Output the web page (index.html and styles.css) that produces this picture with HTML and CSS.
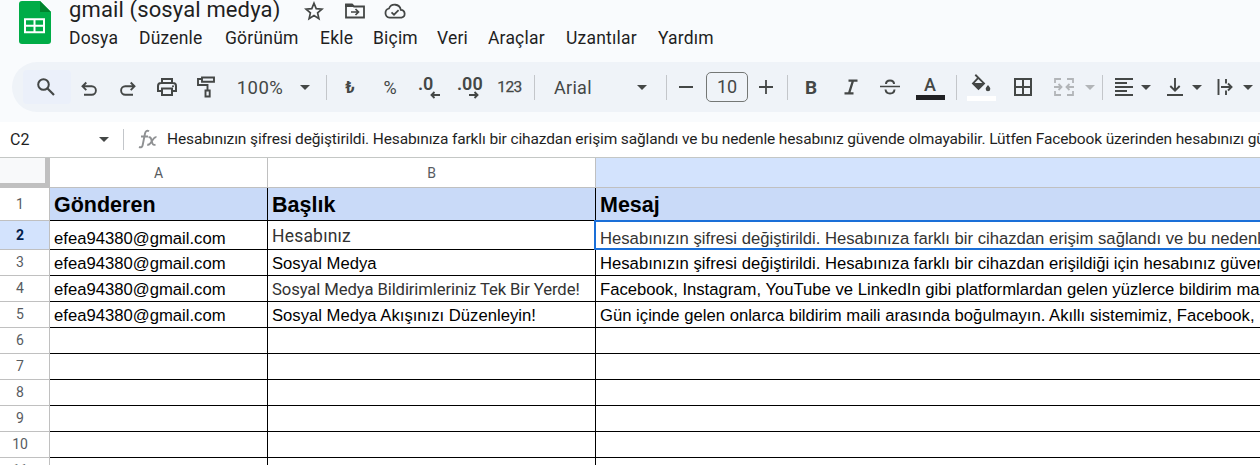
FILE: index.html
```
<!DOCTYPE html>
<html lang="tr">
<head>
<meta charset="utf-8">
<title>gmail (sosyal medya)</title>
<link rel="stylesheet" href="styles.css">
</head>
<body>
<div class="app">
  <header class="header">
    <svg class="logo" width="32" height="43" viewBox="0 0 32 43"><path fill="#00ac47" d="M3 0h18l11 11v29a3 3 0 0 1-3 3H3a3 3 0 0 1-3-3V3a3 3 0 0 1 3-3z"/><path fill="#00832d" d="M21 0l11 11H21z"/><path fill="none" stroke="#fff" stroke-width="2" d="M6 18.200h19v13H6zM6 24.700h19M15.500 18.200v13"/></svg>
    <div class="heading">
      <div class="title-row">
        <span class="doc-title">gmail (sosyal medya)</span>
        <svg class="star" width="20" height="20" viewBox="0 0 20 20"><path class="line" stroke-width="1.700" d="M10 2.200l2.200 5.400 5.800.5-4.400 3.800 1.300 5.700-4.900-3-4.900 3 1.300-5.700L2 8.100l5.800-.5z"/></svg>
        <svg class="move" width="22" height="18" viewBox="0 0 22 18"><path class="line" stroke-width="1.800" d="M2 2.500h6l2 2h10v11H2z"/><path fill="#444746" d="M1 2h7l3 3H1z"/><path class="line" stroke-width="1.700" d="M7 10h7M11.500 7l3 3-3 3"/></svg>
        <svg class="cloud" width="24" height="18" viewBox="0 0 24 18"><path class="line" stroke-width="1.800" d="M6.500 15.700A4.700 4.700 0 0 1 6 6.500a6.200 6.200 0 0 1 11.800 1.300 4 4 0 0 1 .7 7.900z"/><path class="line" stroke-width="1.700" d="M8.500 10.300l2.500 2.400 4.600-4.600"/></svg>
      </div>
      <nav class="menu"><span class="m1">Dosya</span><span class="m2">Düzenle</span><span class="m3">Görünüm</span><span class="m4">Ekle</span><span class="m5">Biçim</span><span class="m6">Veri</span><span class="m7">Araçlar</span><span class="m8">Uzantılar</span><span class="m9">Yardım</span></nav>
    </div>
  </header>

  <div class="toolbar">
    <span class="tool search"><svg width="18" height="18" viewBox="0 0 18 18"><circle class="line" cx="6.500" cy="6.500" r="5.300" stroke-width="2"/><path class="line" stroke-width="2.200" d="M10.300 10.300l6.700 6.700"/></svg></span>
    <span class="tool w43 drop"><svg width="16" height="16" viewBox="0 0 16 16"><path class="line" stroke-width="1.900" d="M5.300 1.500L1.500 5.300l3.800 3.800M1.500 5.300h9.200a4.200 4.200 0 0 1 0 8.400H3"/></svg></span>
    <span class="tool w35 drop"><svg width="16" height="16" viewBox="0 0 16 16"><path class="line" stroke-width="1.900" d="M10.700 1.500l3.800 3.800-3.800 3.800M14.500 5.300H5.300a4.200 4.200 0 0 0 0 8.400H13"/></svg></span>
    <span class="tool w44"><svg width="20" height="18" viewBox="0 0 20 18"><path class="line" stroke-width="2" d="M5 5V1h10v4M5 13H1V8a3 3 0 0 1 3-3h12a3 3 0 0 1 3 3v5h-4M5 10.500h10V17H5z"/><circle cx="16" cy="8.200" r="1" fill="#444746"/></svg></span>
    <span class="tool w34"><svg width="20" height="22" viewBox="0 0 20 22"><path class="line" stroke-width="1.900" d="M6 1.500h12v4.300H6zM6 3H2v6h9.500v5M9.500 14.500h4.200v6H9.500z"/></svg></span>
    <span class="tool zoom">100%</span>
    <span class="tool w16"><i class="caret"></i></span>
    <i class="sep s1"></i>
    <span class="tool w40 lira">₺</span>
    <span class="tool w40 percent">%</span>
    <span class="tool w39 decimal"><b class="d1">.0</b><svg width="10" height="8" viewBox="0 0 10 8"><path class="line" stroke-width="1.900" d="M10 4H1.500M4.500 1l-3 3 3 3"/></svg></span>
    <span class="tool w40 decimal"><b class="d2">.00</b><svg width="10" height="8" viewBox="0 0 10 8"><path class="line" stroke-width="1.900" d="M0 4h8.500M5.500 1l3 3-3 3"/></svg></span>
    <span class="tool numfmt">123</span>
    <i class="sep s2"></i>
    <span class="tool font">Arial</span>
    <span class="tool w20"><i class="caret"></i></span>
    <i class="sep s3"></i>
    <span class="tool w38"><svg width="14" height="2"><path fill="#444746" d="M0 0h14v2H0z"/></svg></span>
    <span class="size">10</span>
    <span class="tool w36"><svg width="14" height="14" viewBox="0 0 14 14"><path class="line" stroke-width="1.800" d="M0 7h14M7 0v14"/></svg></span>
    <i class="sep s4"></i>
    <span class="tool w46 bold">B</span>
    <span class="tool w34"><svg width="14" height="16" viewBox="0 0 14 16"><path class="line" stroke-width="2.300" d="M4.500 1.600h9M.5 14.400h9M9 1.600L5 14.400"/></svg></span>
    <span class="tool w44"><svg width="20" height="16" viewBox="0 0 20 16"><path class="line" stroke-width="1.500" d="M0 7.500h20"/><path class="line" stroke-width="2" d="M14 5C14 2.800 12.300 1.500 10 1.500S6 2.800 6 5M5.500 10.500c.3 2.500 2 4 4.500 4s4.300-1.400 4.500-4"/></svg></span>
    <span class="tool w36 swatch"><span class="letter">A</span><i class="bar black"></i></span>
    <i class="sep s5"></i>
    <span class="tool fill swatch"><svg width="20" height="19" viewBox="0 0 20 19"><path class="line" stroke-width="1.900" d="M4.300.8l8.700 8.600-5.500 5.400L2 9.400 7 4.200"/><path fill="#444746" d="M1.500 9h12l-6 6.300zM17 11c1.500 1.800 2.300 2.900 2.300 3.900a2.300 2.300 0 0 1-4.600 0c0-1 .8-2.100 2.300-3.900z"/></svg><i class="bar white"></i></span>
    <span class="tool w40"><svg width="18" height="18" viewBox="0 0 18 18"><path class="line" stroke-width="2" d="M1 1h16v16H1zM9 1v16M1 9h16"/></svg></span>
    <span class="tool w42"><svg width="20" height="18" viewBox="0 0 20 18"><path class="faded" stroke-width="1.800" d="M7 1H1v4M13 1h6v4M7 17H1v-4M13 17h6v-4M0 9h7M4.500 6l3 3-3 3M20 9h-7M15.500 6l-3 3 3 3"/></svg></span>
    <span class="tool w10"><i class="caret pale"></i></span>
    <i class="sep s6"></i>
    <span class="tool w30 g6"><svg width="18" height="18" viewBox="0 0 18 18"><path class="line" stroke-width="1.800" d="M0 1h18M0 5h12M0 9h18M0 13h12M0 17h18"/></svg></span>
    <span class="tool w14"><i class="caret"></i></span>
    <span class="tool w30 g7"><svg width="16" height="18" viewBox="0 0 16 18"><path class="line" stroke-width="1.900" d="M8 0v12M3.300 8L8 12.700 12.700 8M0 17h16"/></svg></span>
    <span class="tool w14"><i class="caret"></i></span>
    <span class="tool w30 g6"><svg width="16" height="18" viewBox="0 0 16 18"><path class="line" stroke-width="1.900" d="M1.500 1v16M4 9h10.500M11 5.500L14.500 9 11 12.500M9 1v4.500M9 12.500V17"/></svg></span>
    <span class="tool w14 last"><i class="caret"></i></span>
  </div>

  <div class="formula">
    <span class="name">C2</span><i class="caret"></i><i class="sep"></i>
    <svg class="fx" width="20" height="20" viewBox="0 0 20 20"><path fill="none" stroke="#8f9193" stroke-width="1.900" d="M11 2.300C9 1 7.500 2 7 4.500L4.700 16c-.4 2-1.700 2.800-3.700 2M3 7.500h7M10.500 8.500c2.300-1 2.600 1 3.200 3.500.6 2.700 1.300 4.800 3.800 3.500M18.500 8.200c-2-.6-3 1.300-4.500 3.800-1.500 2.700-2.800 4.300-4.700 3.500"/></svg>
    <span class="formula-text">Hesabınızın şifresi değiştirildi. Hesabınıza farklı bir cihazdan erişim sağlandı ve bu nedenle hesabınız güvende olmayabilir. Lütfen Facebook üzerinden hesabınızı güvene alın.</span>
  </div>

  <div class="grid">
    <div class="corner"></div><div class="col">A</div><div class="col">B</div><div class="col active"></div>

    <div class="row-no">1</div><div class="cell head">Gönderen</div><div class="cell head">Başlık</div><div class="cell head">Mesaj</div>

    <div class="row-no active">2</div><div class="cell low">efea94380@gmail.com</div><div class="cell sans b2">Hesabınız</div><div class="cell low selected">Hesabınızın şifresi değiştirildi. Hesabınıza farklı bir cihazdan erişim sağlandı ve bu nedenle hesabınız güvende</div>

    <div class="row-no">3</div><div class="cell">efea94380@gmail.com</div><div class="cell">Sosyal Medya</div><div class="cell">Hesabınızın şifresi değiştirildi. Hesabınıza farklı bir cihazdan erişildiği için hesabınız güvende</div>

    <div class="row-no">4</div><div class="cell">efea94380@gmail.com</div><div class="cell sans b4">Sosyal Medya Bildirimleriniz Tek Bir Yerde!</div><div class="cell">Facebook, Instagram, YouTube ve LinkedIn gibi platformlardan gelen yüzlerce bildirim maili</div>

    <div class="row-no">5</div><div class="cell">efea94380@gmail.com</div><div class="cell">Sosyal Medya Akışınızı Düzenleyin!</div><div class="cell">Gün içinde gelen onlarca bildirim maili arasında boğulmayın. Akıllı sistemimiz, Facebook, </div>

    <div class="row-no">6</div><div class="cell"></div><div class="cell"></div><div class="cell"></div>
    <div class="row-no">7</div><div class="cell"></div><div class="cell"></div><div class="cell"></div>
    <div class="row-no">8</div><div class="cell"></div><div class="cell"></div><div class="cell"></div>
    <div class="row-no">9</div><div class="cell"></div><div class="cell"></div><div class="cell"></div>
    <div class="row-no">10</div><div class="cell"></div><div class="cell"></div><div class="cell"></div>
    <div class="row-no">11</div><div class="cell"></div><div class="cell"></div><div class="cell"></div>
  </div>
</div>
</body>
</html>
```
FILE: styles.css
```
* { box-sizing: border-box; }
body { margin: 0; font-family: Roboto, "Liberation Sans", sans-serif; color: #1f1f1f; }
.app { width: 1260px; height: 465px; overflow: hidden; background: #f9fbfd; }
svg { display: block; flex: none; }
.line { fill: none; stroke: #444746; }
.faded { fill: none; stroke: #b2b5b8; }

.header { display: flex; height: 62px; padding-left: 19px; }
.logo { margin-top: 1px; }
.heading { padding-left: 18px; }
.title-row { display: flex; height: 22px; align-items: center; }
.doc-title { width: 235px; margin-top: -2px; font-size: 22px; line-height: 26px; white-space: nowrap; letter-spacing: .13px; }
.move { margin-left: 20px; }
.cloud { margin-left: 17px; }
.menu { display: flex; height: 32px; align-items: center; font-size: 17.500px; letter-spacing: .2px; white-space: nowrap; }
.menu span { flex: none; }
.m1 { width: 70px; }
.m2 { width: 86px; }
.m3 { width: 95px; }
.m4 { width: 53px; }
.m5 { width: 64px; }
.m6 { width: 51px; }
.m7 { width: 78px; }
.m8 { width: 92px; }

.toolbar { display: flex; align-items: center; height: 50px; margin-left: 12px; padding-left: 11px; border-radius: 25px 0 0 25px; background: #eff3f8; color: #444746; overflow: hidden; }
.tool { display: flex; flex: none; height: 34px; align-items: center; justify-content: center; }
.search { width: 48px; margin-right: -4px; padding-right: 2px; border-radius: 4px; background: #ebf0fa; }
.drop { padding-top: 3px; }
.w10 { width: 10px; }
.w14 { width: 14px; }
.w16 { width: 16px; }
.w20 { width: 20px; }
.w30 { width: 30px; }
.w34 { width: 34px; }
.w35 { width: 35px; }
.w36 { width: 36px; }
.w38 { width: 38px; }
.w39 { width: 39px; }
.w40 { width: 40px; }
.w42 { width: 42px; }
.w43 { width: 43px; }
.w44 { width: 44px; }
.w46 { width: 46px; }
.g6 { margin-left: 6px; }
.g7 { margin-left: 7px; }
.last { margin-left: 1px; }
.caret { flex: none; width: 0; height: 0; border: 5px solid transparent; border-top-color: #444746; border-bottom: 0; }
.caret.pale { border-top-color: #b2b5b8; }
.sep { flex: none; width: 1px; height: 25px; background: #c3c6ca; }
.s1 { margin: 0 3px 0 13px; }
.s2 { margin-left: 4px; }
.s3 { margin-left: 14px; }
.s4 { margin-left: 3px; }
.s5 { margin: 0 2px 0 8px; }
.s6 { margin-left: 7px; }
.zoom { width: 74px; padding-top: 1px; font-size: 18.500px; letter-spacing: .5px; }
.lira { font-size: 16px; font-weight: 700; }
.percent { font-size: 18px; }
.decimal { flex-direction: column; align-items: flex-start; }
.decimal b { font-size: 18px; line-height: 17px; font-weight: 600; }
.decimal .d1 { padding-left: 8px; }
.decimal .d2 { padding-left: 8px; }
.decimal svg { margin: -1px 0 0 20px; }
.numfmt { width: 41px; font-size: 15.500px; letter-spacing: -.5px; -webkit-text-stroke: .25px #444746; }
.font { width: 97px; padding-left: 19px; justify-content: flex-start; font-size: 18px; letter-spacing: .3px; }
.size { flex: none; width: 42px; height: 30px; margin-left: 1px; border: 1px solid #747775; border-radius: 5px; font-size: 18px; line-height: 28px; text-align: center; }
.bold { font-size: 19px; font-weight: 700; }
.swatch { flex-direction: column; }
.letter { font-size: 18px; line-height: 21px; font-weight: 500; }
.bar { width: 29px; height: 5px; }
.black { background: #202124; }
.white { margin-top: 3px; background: #fff; }
.fill { width: 44px; }

.formula { display: flex; align-items: center; height: 36px; margin-top: 10px; padding-bottom: 1px; border-bottom: 1px solid #c4c7c5; background: #fff; overflow: hidden; white-space: nowrap; }
.name { flex: none; width: 99px; padding-left: 10px; font-size: 16px; }
.formula .sep { height: 21px; margin: 0 14px 0 14px; }
.formula-text { margin-left: 9px; font-size: 15.500px; letter-spacing: -.13px; }

.grid { display: grid; grid-template-columns: 50px 218px 328px 672px; grid-template-rows: 30px 33px 29px; grid-auto-rows: 26px; background: #fff; font-family: "Liberation Sans", Arial, sans-serif; }
.corner { border: solid #c0c0c0; border-width: 0 5px 5px 0; background: #f8f9fa; }
.col { display: flex; align-items: center; justify-content: center; border: solid #c0c0c0; border-width: 0 1px 1px 0; color: #575b5f; font: 14px Roboto, sans-serif; }
.col.active { background: #d3e3fd; }
.row-no { display: flex; align-items: center; justify-content: center; padding-right: 9px; padding-bottom: 1px; border: solid #c0c0c0; border-width: 0 1px 1px 0; color: #575b5f; font: 14px Roboto, sans-serif; }
.row-no.active { background: #d3e3fd; color: #041e49; font-weight: 700; }
.cell { border: solid #000; border-width: 0 1px 1px 0; padding-left: 4px; overflow: hidden; white-space: nowrap; color: #000; font-size: 16.667px; line-height: 27px; }
.cell.head { background: #c9daf8; font-size: 21.500px; font-weight: 700; line-height: 35px; }
.cell.low { line-height: 35px; }
.cell.sans { color: #333; font-family: Roboto, sans-serif; }
.cell.b2 { font-size: 17.500px; line-height: 31px; letter-spacing: .2px; }
.cell.b4 { font-size: 16.667px; letter-spacing: -.1px; }
.cell.selected { margin: -1px 0 0 -2px; border: 2px solid #1a6fd8; border-right: 0; background: #fff; color: #333; line-height: 34px; z-index: 1; }
```
